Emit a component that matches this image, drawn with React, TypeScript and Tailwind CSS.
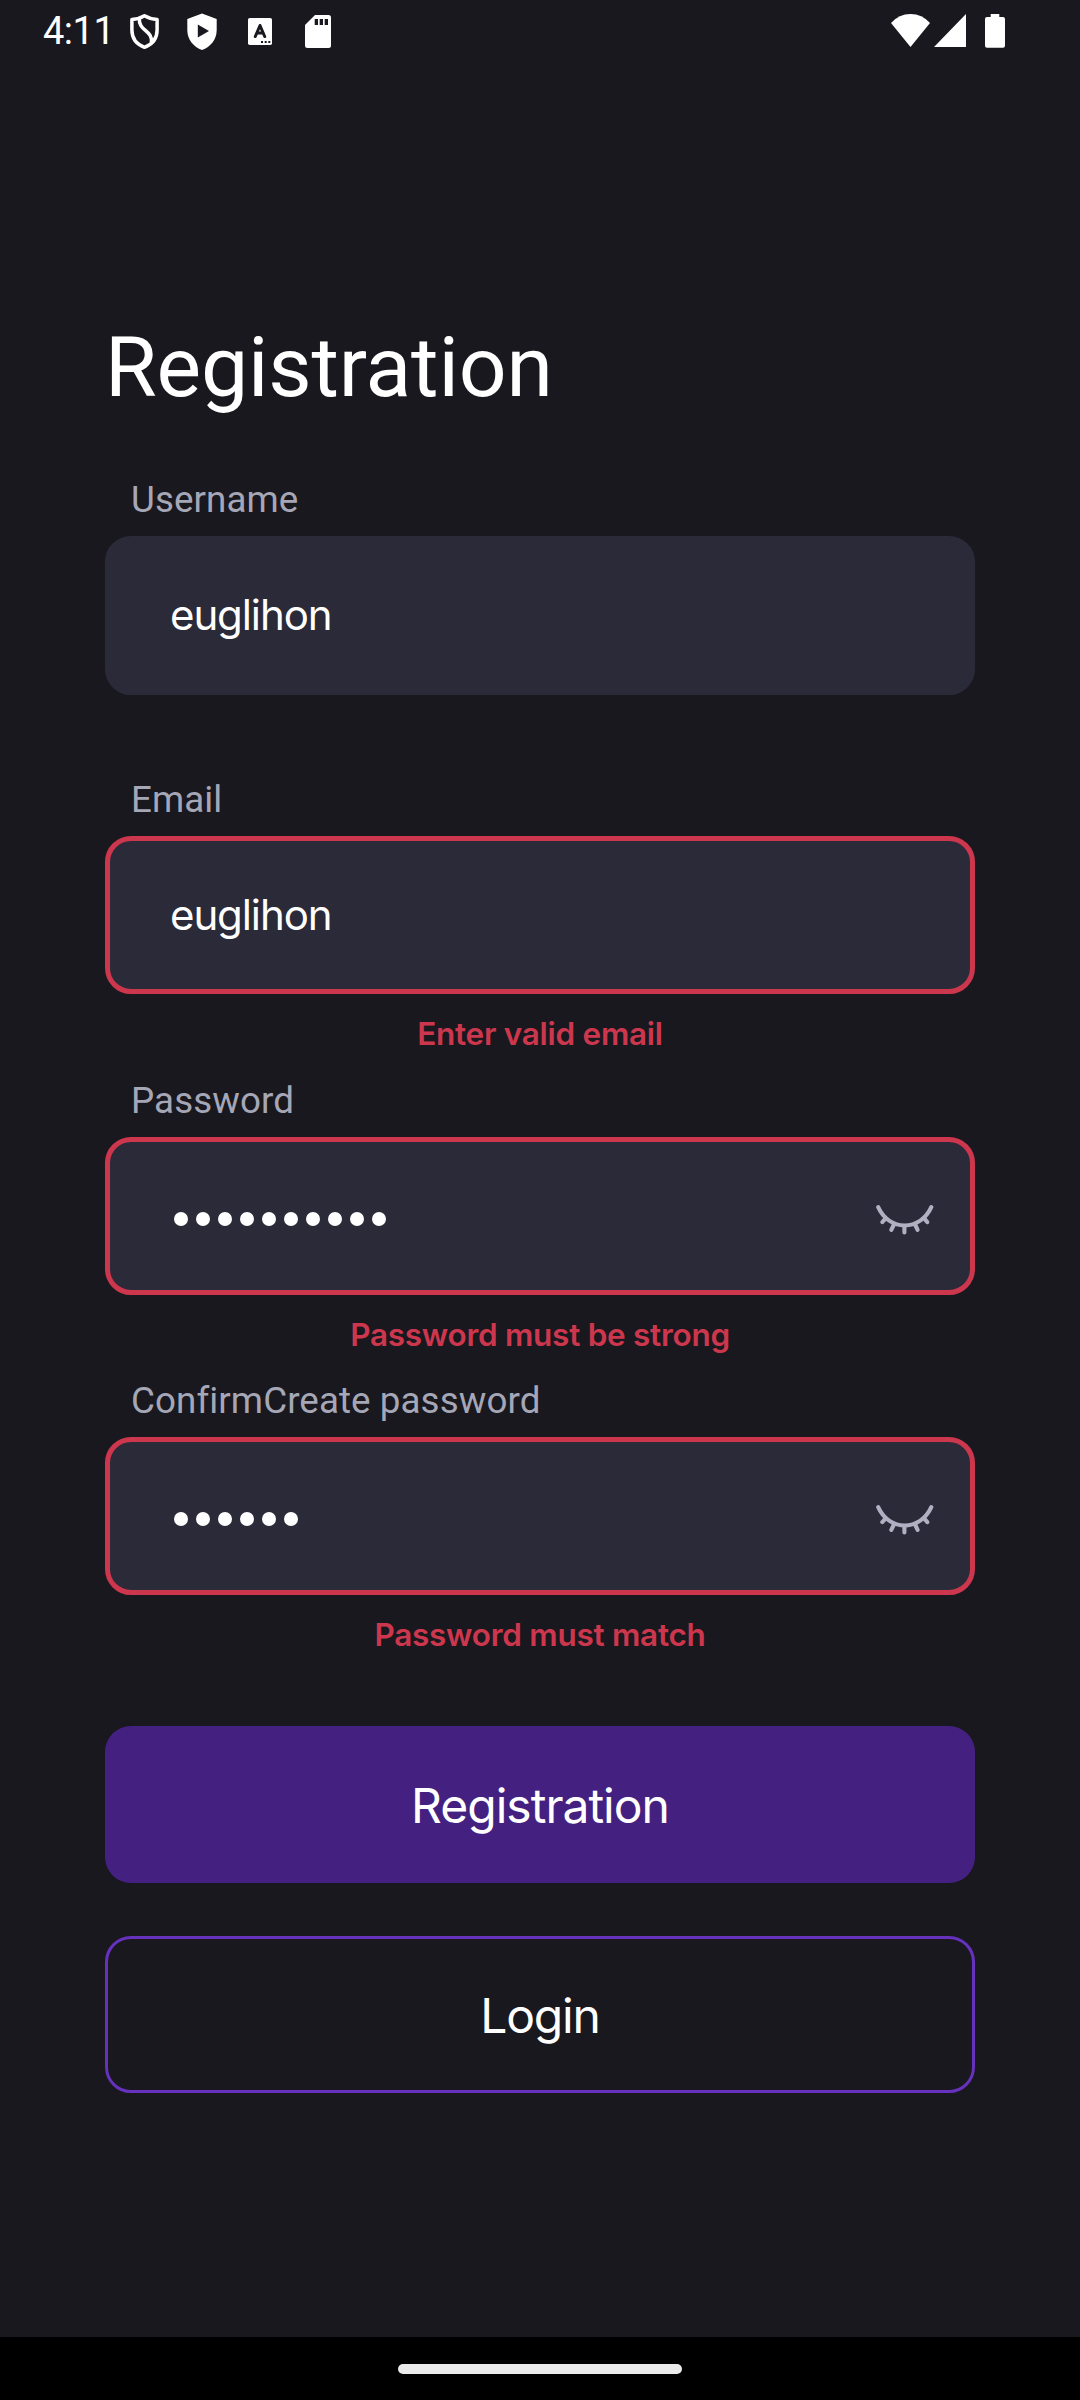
import React from 'react';

function ClosedEye() {
  return (
    <svg className="mr-[36px] mt-[8px] h-[30px] w-[58px]" viewBox="0 0 58 30" fill="none" stroke="#afb0c1" strokeWidth="4.1" strokeLinecap="round">
      <path d="M2.200 2.200C13 26.500 44.300 26.500 55.300 2.200" />
      <path d="M9 14.2L6.3 17.1M17.7 20L15.3 24.8M28.4 21V27.4M39.3 20L41.6 24.8M48.8 14.2L51.3 17.1" />
    </svg>
  );
}

function StatusBar() {
  return (
    <header className="flex h-[64px] justify-between pl-[43px] pr-[75px]">
      <div className="flex">
        <span className="w-[87px] pt-[9px] text-[38px] leading-[45px] tracking-[-0.5px]">4:11</span>
        <svg className="h-[64px] w-[30px]" viewBox="0 0 30 64" fill="none" stroke="white" strokeWidth="3.5" strokeLinejoin="round">
          <path d="M14.5 15.8C10.5 18.3 6 19.2 1.9 19.4V30C1.9 38.5 7 44.5 14.5 47.3C22 44.5 27.1 38.5 27.1 30V19.4C23 19.2 18.5 18.3 14.5 15.8Z" />
          <path d="M9.300 18C8.500 32 23 29.500 21.500 43" />
        </svg>
        <svg className="ml-[27px] h-[64px] w-[30px]" viewBox="0 0 30 64">
          <path fill="white" d="M15 13.5L29.7 19V30C29.7 39.5 23.5 47 15 50C6.500 47 .3 39.500 .3 30V19Z" />
          <path fill="#19181e" d="M10.800 24.500L22 31L10.800 37.500Z" />
        </svg>
        <svg className="ml-[31px] h-[64px] w-[24px]" viewBox="0 0 24 64">
          <rect y="18" width="24" height="27" rx="1.800" fill="white" />
          <path d="M7.300 36.500L12 25.500L16.700 36.500M9 33H15" fill="none" stroke="#19181e" strokeWidth="3" strokeLinecap="round" strokeLinejoin="round" />
          <path d="M13 41h2v2h-2zM16.700 41h2v2h-2zM20.300 41h2v2h-2z" fill="#19181e" />
        </svg>
        <svg className="ml-[33px] h-[64px] w-[26px]" viewBox="0 0 26 64">
          <path fill="white" d="M10 15H23.500Q26 15 26 17.500V45.500Q26 48 23.500 48H2.500Q0 48 0 45.500V25Z" />
          <path fill="#19181e" d="M9.700 19h3.300v6H9.700zM14.700 19h3.300v6h-3.300zM19.700 19h3.300v6h-3.300z" />
        </svg>
      </div>
      <div className="flex">
        <svg className="h-[64px] w-[39px]" viewBox="0 0 39 64" fill="white"><path d="M0 23Q8 14 19.500 14Q31 14 39 23L19.500 47Z" /></svg>
        <svg className="ml-[4px] h-[64px] w-[32px]" viewBox="0 0 32 64" fill="white"><path d="M0 47L32 14V47Z" /></svg>
        <svg className="ml-[19px] h-[64px] w-[20px]" viewBox="0 0 20 64" fill="white"><path d="M5.700 14H14.300V17H18Q20 17 20 19V45.700Q20 47.700 18 47.700H2Q0 47.700 0 45.700V19Q0 17 2 17H5.700Z" /></svg>
      </div>
    </header>
  );
}

type FieldProps = { label: string; value?: string; dots?: number; error?: string };

function Field({ label, value, dots, error }: FieldProps) {
  return (
    <div>
      <div className="ml-[26px] h-[61px] pt-[4px] text-[36.75px] leading-[42px] tracking-[0.08px] text-[#a5a7b7]">{label}</div>
      <div className={`flex items-center justify-between rounded-[26px] border-[5px] bg-[#2b2a39] ${error ? 'h-[158px] border-[#cc374e]' : 'h-[159px] border-[#2b2a39] pb-px'}`}>
        {dots ? (
          <div className="ml-[64px] mt-[6px] flex gap-[8px]">
            {Array.from({ length: dots }, (_, i) => <span key={i} className="size-[14px] rounded-full bg-white" />)}
          </div>
        ) : (
          <span className="ml-[60px] font-[Inter] text-[42px] leading-[48px] tracking-[-1.1px]">{value}</span>
        )}
        {dots ? <ClosedEye /> : null}
      </div>
      {error && <div className="mt-[20px] text-center font-[Inter] text-[31.5px] font-semibold leading-[40px] tracking-[-0.27px] text-[#cc374e]">{error}</div>}
    </div>
  );
}

export default function App() {
  return (
    <main className="flex h-[2400px] w-[1080px] flex-col bg-[#19181e] font-[Roboto,sans-serif] text-white">
      <StatusBar />
      <section className="flex-1 px-[105px]">
        <h1 className="mt-[254px] h-[157px] text-[84px] leading-[100px] tracking-[-0.15px]">Registration</h1>
        <div className="h-[300px]"><Field label="Username" value="euglihon" /></div>
        <div className="h-[301px]"><Field label="Email" value="euglihon" error="Enter valid email" /></div>
        <div className="h-[300px]"><Field label="Password" dots={10} error="Password must be strong" /></div>
        <div className="h-[300px]"><Field label="ConfirmCreate password" dots={6} error="Password must match" /></div>
        <button className="mt-[50px] block h-[157px] w-full rounded-[26px] bg-[#442181] pt-[2px] font-[Inter] text-[48px] tracking-[-1px]">Registration</button>
        <button className="mt-[53px] block h-[157px] w-full rounded-[26px] border-[3px] border-[#6531bd] pt-[2px] font-[Inter] text-[48px] tracking-[-1.2px]">Login</button>
      </section>
      <footer className="flex h-[63px] justify-center bg-black pt-[27px]"><div className="h-[10px] w-[284px] rounded-full bg-[#ebebeb]" /></footer>
    </main>
  );
}
